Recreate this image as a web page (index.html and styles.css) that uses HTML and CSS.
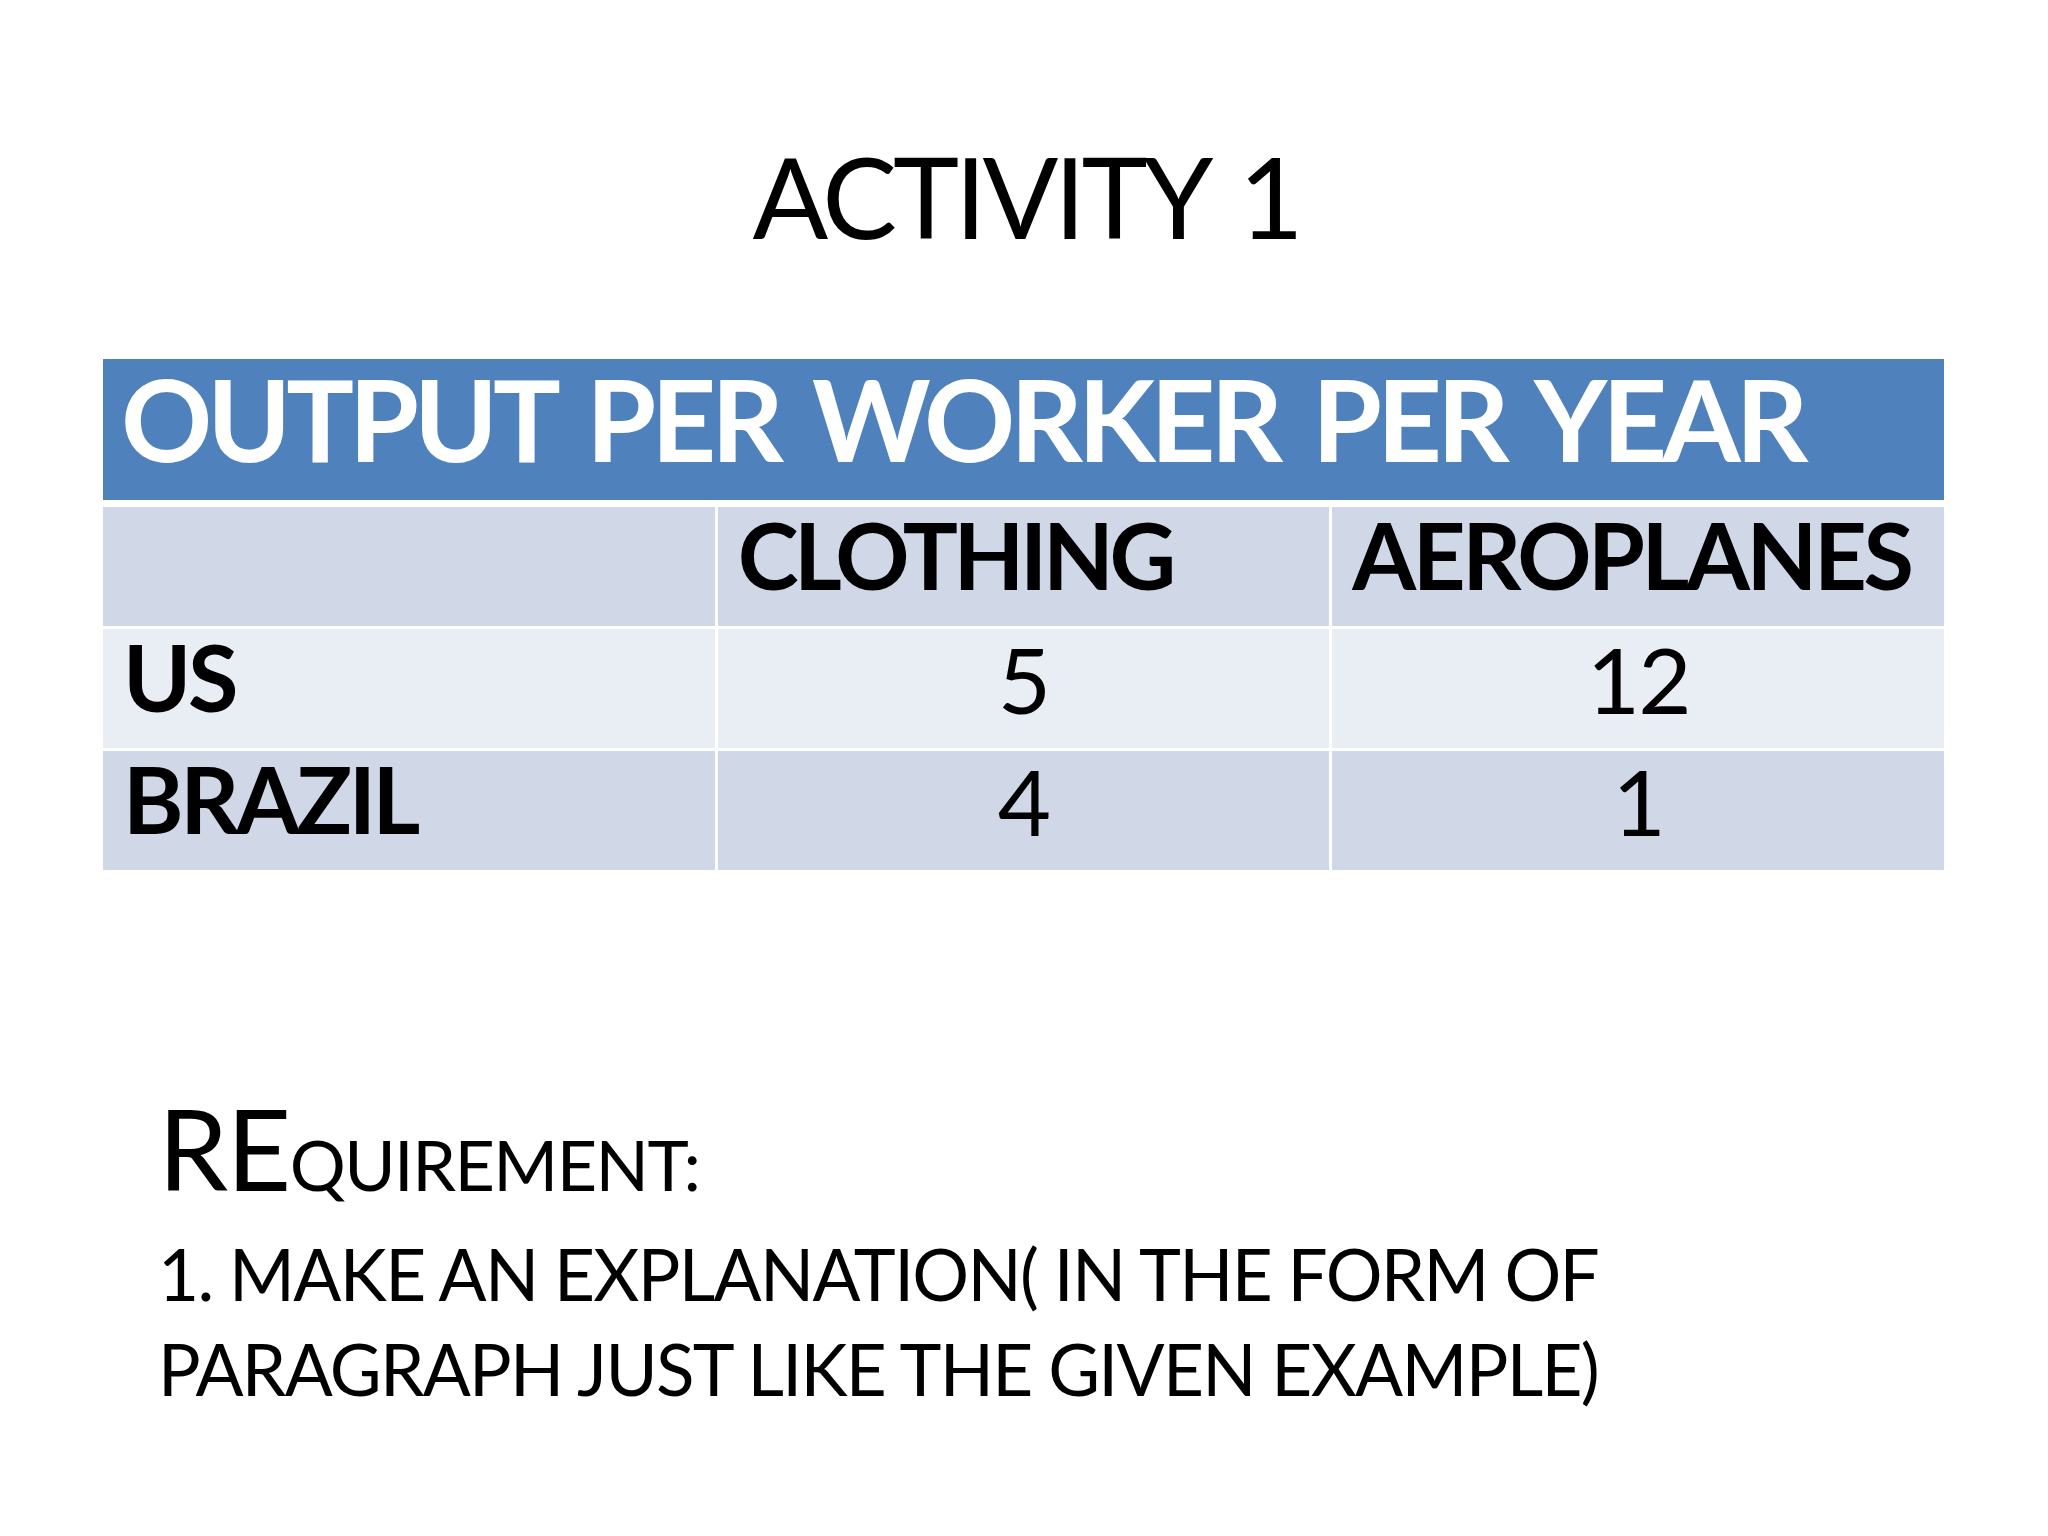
FILE: index.html
```html
<!DOCTYPE html>
<html lang="en">
<head>
<meta charset="utf-8">
<title>Activity 1</title>
<link rel="stylesheet" href="styles.css">
</head>
<body>
<main class="slide">
  <h1 class="title">ACTIVITY 1</h1>
  <div class="grid">
    <div class="cell head">OUTPUT PER WORKER PER YEAR</div>
    <div class="cell band"></div>
    <div class="cell band bold tight">CLOTHING</div>
    <div class="cell band bold">AEROPLANES</div>
    <div class="cell light bold">US</div>
    <div class="cell light num">5</div>
    <div class="cell light num">12</div>
    <div class="cell band bold">BRAZIL</div>
    <div class="cell band num">4</div>
    <div class="cell band num">1</div>
  </div>
  <section class="req">
    <p class="req-title">RE<span class="sc">QUIREMENT:</span></p>
    <p class="req-text">1. MAKE AN EXPLANATION( IN THE FORM OF<br>PARAGRAPH JUST LIKE THE GIVEN EXAMPLE)</p>
  </section>
</main>
</body>
</html>
```

FILE: styles.css
```css
html, body {
  margin: 0;
  padding: 0;
  background: #ffffff;
}

.slide {
  width: 2048px;
  height: 1536px;
  box-sizing: border-box;
  padding-top: 140px;
  font-family: Lato, "Liberation Sans", sans-serif;
  color: #000000;
  overflow: hidden;
}

.title {
  margin: 0;
  font-size: 112px;
  font-weight: 400;
  line-height: 112px;
  letter-spacing: -0.036em;
  word-spacing: 0.08em;
  text-indent: 0.036em;
  text-align: center;
  height: 219px;
}

.grid {
  margin-left: 103px;
  width: 1841px;
  display: grid;
  grid-template-columns: repeat(3, minmax(0, 1fr));
  column-gap: 3px;
  row-gap: 3px;
  background: #ffffff;
}

.cell {
  box-sizing: border-box;
  height: 119px;
  padding: 2px 18px 0 20px;
  font-size: 92px;
  line-height: 92px;
  white-space: nowrap;
  overflow: visible;
}

.head {
  grid-column: 1 / 4;
  height: 141px;
  margin-bottom: 4px;
  padding: 3px 18px 0 18px;
  background: #4f81bd;
  color: #ffffff;
  font-size: 113px;
  line-height: 113px;
  font-weight: 700;
  letter-spacing: -0.044em;
  word-spacing: 0.1em;
}

.band {
  background: #d0d8e8;
}

.light {
  background: #e9edf4;
}

.bold {
  font-weight: 700;
  letter-spacing: -0.037em;
}

.tight {
  letter-spacing: -0.048em;
}

.num {
  text-align: center;
  font-weight: 400;
  padding: 4px 0 0 0;
  letter-spacing: -0.02em;
}

.req {
  margin-top: 222px;
  margin-left: 158px;
}

.req-title {
  margin: 0;
  font-size: 112px;
  line-height: 112px;
  letter-spacing: -0.014em;
}

.sc {
  font-size: 70px;
}

.req-text {
  margin: 6px 0 0 0;
  font-size: 71px;
  line-height: 95px;
  letter-spacing: -0.0235em;
}
```
